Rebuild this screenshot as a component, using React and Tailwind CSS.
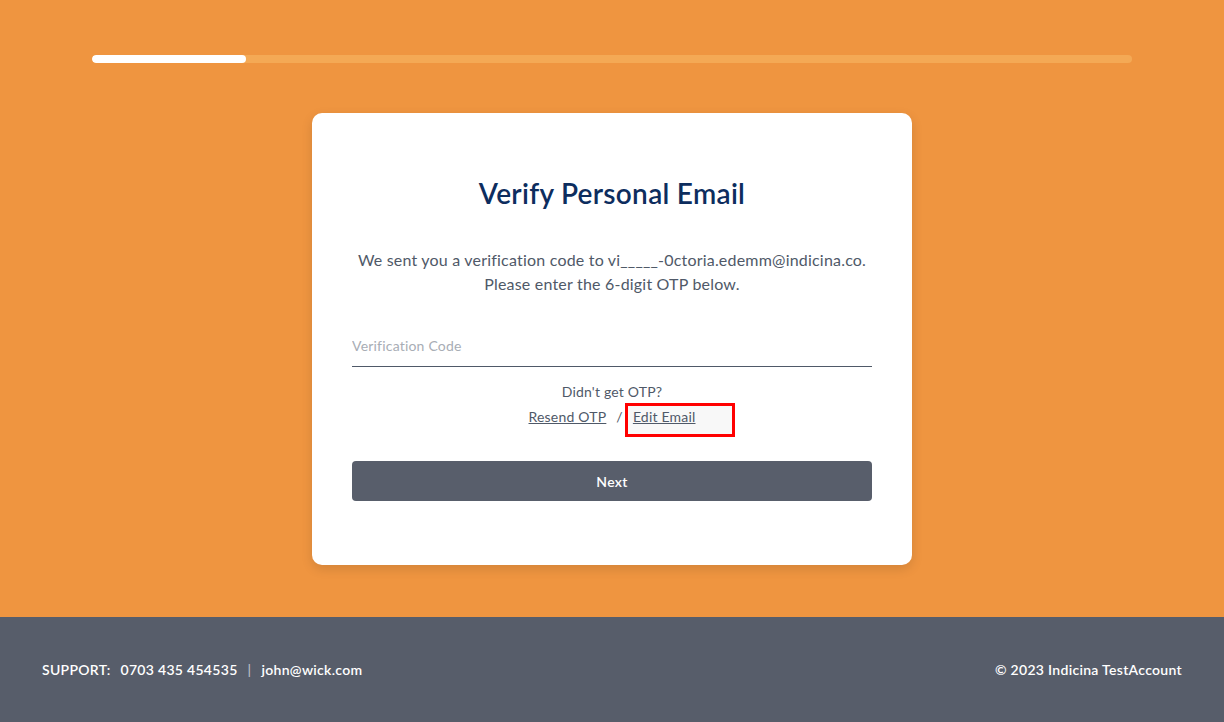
import React, { useState } from "react";

const App = () => {
  const [code, setCode] = useState("");

  return (
    <div className="min-h-screen flex flex-col font-['Lato','Open_Sans',sans-serif] bg-[#ef9540]">
      <div className="h-[617px] flex flex-col items-center">
        {/* Progress */}
        <div className="w-[1040px] mt-[55px] h-[8px] rounded-full bg-[#f4a955] overflow-hidden">
          <div className="h-full w-[154px] rounded-full bg-white" />
        </div>

        {/* Card */}
        <div className="mt-[50px] w-[600px] h-[452px] bg-white rounded-[10px] shadow-[0_4px_12px_rgba(0,0,0,0.12)] px-10 pt-[62px] flex flex-col items-center">
          <h1 className="text-[28px] leading-9 font-semibold text-[#0d2d5e] tracking-[0.3px]">
            Verify Personal Email
          </h1>
          <p className="mt-[37px] text-[16px] leading-6 text-[#4f5968] text-center tracking-[0.2px]">
            We sent you a verification code to vi_____-0ctoria.edemm@indicina.co.
            <br />
            Please enter the 6-digit OTP below.
          </p>

          <input
            type="text"
            value={code}
            onChange={(e) => setCode(e.target.value)}
            placeholder="Verification Code"
            className="mt-[37px] w-full h-[34px] border-b border-[#4f5968] text-[14px] tracking-[0.2px] text-[#4f5968] placeholder:text-[#a8adb5] focus:outline-none pb-[8px]"
          />

          <p className="mt-[15px] text-[14px] leading-5 tracking-[0.2px] text-[#4f5968]">Didn't get OTP?</p>
          <div className="mt-[5px] flex items-center text-[14px] leading-5 tracking-[0.2px] text-[#4f5968]">
            <a className="underline cursor-pointer">Resend OTP</a>
            <span className="mx-[10px]">/</span>
            <span className="relative">
              <span className="absolute -left-[8px] -top-[4px] w-[110px] h-[34px] border-[3px] border-[#ff0000] bg-[#f8f8f8]" />
              <a className="relative underline cursor-pointer">Edit Email</a>
            </span>
          </div>

          <button className="mt-[34px] w-full h-[40px] rounded bg-[#585e6b] text-white text-[14px] font-semibold tracking-[0.3px]">
            Next
          </button>
        </div>
      </div>

      {/* Footer */}
      <footer className="h-[105px] bg-[#575d6a] px-[42px] flex items-center justify-between text-[14px] font-semibold tracking-[0.3px] text-white">
        <div className="flex items-center">
          <span>SUPPORT:</span>
          <span className="ml-[10px]">0703 435 454535</span>
          <span className="mx-[10px] text-[#b9bcc3]">|</span>
          <span>john@wick.com</span>
        </div>
        <div>© 2023 Indicina TestAccount</div>
      </footer>
    </div>
  );
};

export default App;
